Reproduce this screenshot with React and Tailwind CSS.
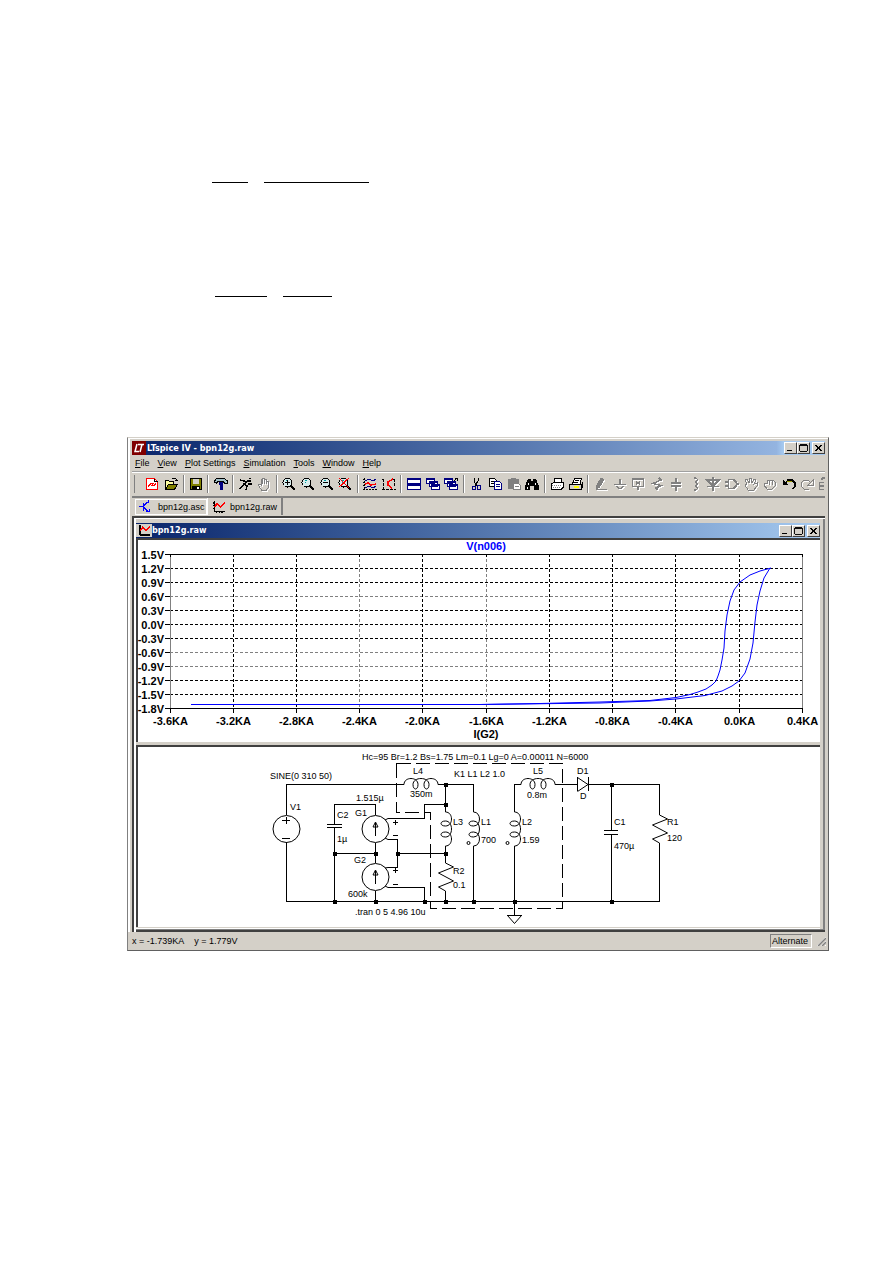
const MENUS = ['File', 'View', 'Plot Settings', 'Simulation', 'Tools', 'Window', 'Help']

const GRAY = '#808080'
const NAVY = '#000080'

function Svg({ children, className = 'block h-4 w-4 shrink-0' }) {
  return (
    <svg viewBox="0 0 16 16" className={className} fill="none" stroke="#000" shapeRendering="crispEdges" aria-hidden="true">
      {children}
    </svg>
  )
}

// Disabled icons are gray with a white highlight one pixel down and to the right
function Etched({ children }) {
  return (
    <Svg>
      <g stroke="#fff" transform="translate(1 1)">{children}</g>
      <g stroke={GRAY}>{children}</g>
    </Svg>
  )
}

function Lens({ children }) {
  return (
    <Svg>
      <circle cx="6.5" cy="6.5" r="4.5" fill="#d8ecec" />
      <path d="M5 4.5h2M4.5 6h1" stroke="#00a0a0" />
      <path d="M10 10l4 4" strokeWidth="2" />
      {children}
    </Svg>
  )
}

function Cascade({ children }) {
  return (
    <Svg>
      <g stroke={NAVY} fill="#fff">
        <path d="M1.5 2.5h8v5h-8zM4.5 5.5h8v5h-8zM6.5 8.5h8v5h-8z" />
        <path d="M1 3.5h9M4 6.5h9M6 9.5h9" />
      </g>
      {children}
    </Svg>
  )
}

function PlotIcon({ className }) {
  return (
    <Svg className={className}>
      <path d="M2.5 1v13M2 13.5h13M1 3.5h1M1 6.5h1M1 9.5h1M5.5 14v1M8.5 14v1M11.5 14v1" strokeWidth="1.5" />
      <path d="M3 8l3-4 4 4 5-5" stroke="#f00" strokeWidth="2" />
    </Svg>
  )
}

const HAND = 'M5.5 14L2.5 9.5V8h2l1 1V3.5h1V8V2.5h2V8V3.5h2V8V5.5h2V11l-2 3z'

const TOOL_GROUPS = [
  [
    ['New Schematic', <Svg><path d="M2.5 2.5h8l3 3v8h-11z" fill="#fff" stroke="#f00" /><path d="M10.5 2.5v3h3" stroke="#000" /><path d="M4 10.5l3-3h2l-1 2h2l2-2" stroke="#f00" strokeWidth="1.5" /></Svg>],
    ['Open', <Svg><path d="M2.5 13V4.5h3l1 1h4V8" fill="#ffffa0" /><path d="M2.5 13.5L5.5 8.5h9l-3 5z" fill="#808000" /><path d="M9 3l2-1 2 1v2M11.5 4.5h3" /></Svg>],
  ],
  [
    ['Save', <Svg><path d="M2.5 2.5h11v11h-11z" fill="#808000" /><path d="M5 3h6v5H5z" fill="#d4d0c8" stroke="none" /><path d="M4 10h8v4H4z" fill="#000" stroke="none" /><path d="M9 11h2v2H9z" fill="#fff" stroke="none" /></Svg>],
  ],
  [
    ['Control Panel', <Svg><path d="M1.5 6.5V5l2-2.5h8L14.5 5v2h-3L10 5.5H5L3.5 7z" fill="#a0c0c8" /><path d="M6 7h4M8 7v7" stroke={NAVY} strokeWidth="3" /></Svg>],
  ],
  [
    ['Run', <Svg><path d="M11 2.5h2M13 5l-3 0-4 3 3 2-1 4M6 8l-4 5M2 4l4 1 3 1M10 8h4" strokeWidth="1.5" /></Svg>],
    ['Halt', <Etched><path d={HAND} /></Etched>],
  ],
  [
    ['Zoom In', <Lens><path d="M4 6.5h5M6.5 4v5" /></Lens>],
    ['Pan', <Lens />],
    ['Zoom Out', <Lens><path d="M4 6.5h5" /></Lens>],
    ['Zoom Full', <Lens><path d="M2 2l10 10M12 2L2 11" stroke="#f00" strokeWidth="1.25" /></Lens>],
  ],
  [
    ['Autorange', <Svg><path d="M2.5 2v12M1 13.5h14M1 3.5h1M1 6.5h1M1 9.5h1" strokeDasharray="2 1" /><path d="M3 8l3-1 3 2 5-1" stroke="#f00" strokeWidth="1.5" /><path d="M3 5l4-2 4 2 3-2M3 12l4-2 4 2 3-2" stroke={NAVY} /></Svg>],
    ['Pick Visible Traces', <Svg><path d="M2.5 3v11M1 13.5h14M1 3.5h2M13.5 3v8M11 3.5h4" strokeDasharray="3 1" /><path d="M12 3L7 6v3l4 3" stroke="#f00" strokeWidth="1.5" /></Svg>],
  ],
  [
    ['Tile', <Svg><path d="M1.5 2.5h13v5h-13zM1.5 8.5h13v5h-13z" stroke={NAVY} fill="#fff" /><path d="M1 3h14M1 9h14" stroke={NAVY} strokeWidth="2" /></Svg>],
    ['Cascade', <Cascade />],
    ['Close All', <Cascade><path d="M11 5l3-3M12 2.5h3M14.5 2v3" /></Cascade>],
  ],
  [
    ['Cut', <Svg><path d="M6 2v3l3 5M10 2v3L7 10" /><path d="M4.5 10.5h3v3h-3zM9.5 9.5h3v4h-3z" stroke={NAVY} /></Svg>],
    ['Copy', <Svg><path d="M2.5 2.5h5l2 2v6h-7zM4 5.5h3M4 7.5h3" fill="#fff" /><path d="M7.5 5.5h5l2 2v6h-7zM9 8.5h4M9 10.5h4" fill="#fff" stroke={NAVY} /></Svg>],
    ['Paste', <Svg><path d="M2 3h11v10H2z" fill={GRAY} stroke="none" /><path d="M5 2.5h5" stroke={GRAY} strokeWidth="2" /><path d="M7.5 7.5h5l2 2v4h-7zM9 10.5h4" fill="#fff" stroke={GRAY} /></Svg>],
    ['Find', <Svg><path d="M4 3h3v2h2V3h3l3 7v4h-5v-4H6v4H1v-4z" fill="#000" stroke="none" /><path d="M4 7v2M11 7v2M3 11v2" stroke="#fff" /></Svg>],
  ],
  [
    ['Print Setup', <Svg><path d="M5 7l1-4.5h7L12 7M2.5 8L5 6.5h9v5l-2 2H2.5z" fill="#fff" /><path d="M3 9.5h9M4 11.5h8" stroke={GRAY} strokeDasharray="1 1" /></Svg>],
    ['Print', <Svg><path d="M4.5 8l2-5.5h7L12 8" fill="#fff" /><path d="M7 4.5h4M6 6.5h4" /><path d="M1.5 8.5h12v5h-12z" fill="#d4d0c8" strokeWidth="1.5" /><path d="M6 11h5" stroke="#ff0" strokeWidth="1.5" /><path d="M14.5 6v6" /></Svg>],
  ],
  [
    ['Wire', <Etched><path d="M8 2L3 11v2l3-2 5-8" fill={GRAY} /><path d="M3 13.5h11" strokeWidth="1.5" /></Etched>],
    ['Ground', <Etched><path d="M8 3v5M2 8.5h12M4 10l4 3 4-3" strokeWidth="1.25" /></Etched>],
    ['Label Net', <Etched><path d="M2.5 3h11v7.5h-11zM8 10v4M6.5 5v4M9.5 5v4M6 7h4" strokeWidth="1.5" /></Etched>],
    ['Resistor', <Etched><path d="M10 2l2 2-8 3.5 8 2-5 2.5 2 2" strokeWidth="1.5" /></Etched>],
    ['Capacitor', <Etched><path d="M8 2v5M8 10v5M3 7h10M3 10h10" strokeWidth="1.75" /></Etched>],
    ['Inductor', <Etched><path d="M7 2h2l2 2-3 2 3 2-3 2 3 2-2 2H7" strokeWidth="1.25" /></Etched>],
    ['Diode', <Etched><path d="M8 1v14M2 4h12L8 10zM2 10.5h12" strokeWidth="1.5" /></Etched>],
    ['Component', <Etched><path d="M4.5 3.5h5l3 3v3l-3 3h-5zM1 6h3M1 10h3M12 8h3" strokeWidth="1.5" /></Etched>],
    ['Move', <Etched><path d="M5 14L2 9l2-1L2 4l2-1 2 4V2h2l1 5 2-4 2 1-2 4 3-1v3l-3 4z" /></Etched>],
    ['Drag', <Etched><path d="M5 13L2 9V7h3V5l2-1 2 1 2-1 2 2v4l-3 3zM7.5 5v4M10 5v4" /></Etched>],
    ['Undo', <Svg><path d="M4 8l3-4h4l3 3v3l-2 3" strokeWidth="1.5" /><path d="M6 6l2-1h3" stroke="#a0a000" /><path d="M2 4v5h5z" fill="#000" stroke="none" /></Svg>],
    ['Redo', <Etched><path d="M12 7L9 4H5L2 7v3l3 3h5M14 4v5H9z" /></Etched>],
  ],
]

const BEVEL = 'border border-t-white border-l-white border-r-[#404040] border-b-[#404040] bg-[#d4d0c8]'

function CaptionButtons() {
  return (
    <div className="ml-auto flex shrink-0">
      <button aria-label="Minimize" className={`${BEVEL} h-3 w-[13px]`}>
        <Svg className="block h-full w-full"><path d="M3 12h7" strokeWidth="3" /></Svg>
      </button>
      <button aria-label="Maximize" className={`${BEVEL} h-3 w-[13px]`}>
        <Svg className="block h-full w-full"><path d="M2 2.5h12v11H2zM2 4h12" strokeWidth="1.5" /></Svg>
      </button>
      <button aria-label="Close" className={`${BEVEL} ml-0.5 h-3 w-[13px]`}>
        <Svg className="block h-full w-full"><path d="M3 3l10 10M13 3L3 13" strokeWidth="2.5" /></Svg>
      </button>
    </div>
  )
}

// ---- waveform plot ----
const X_TICKS = [-3.6, -3.2, -2.8, -2.4, -2.0, -1.6, -1.2, -0.8, -0.4, 0, 0.4]
const Y_TICKS = [1.5, 1.2, 0.9, 0.6, 0.3, 0, -0.3, -0.6, -0.9, -1.2, -1.5, -1.8]
const FAINT_X = [-2.4, -1.6]
const FAINT_Y = [0.6, -0.6, -0.9]
const xPos = (v) => Math.floor(32 + (v + 3.6) * 158.1) + 0.5
const yPos = (v) => Math.floor(14 + (1.5 - v) * 46.7) + 0.5

function Waveform() {
  return (
    <svg viewBox="0 0 682 202" className="block h-auto w-full bg-white" fill="none" stroke="#000" role="img" aria-label="V(n006) against I(G2)">
      <g shapeRendering="crispEdges">
        {Y_TICKS.slice(1, -1).map((v) => (
          <path key={v} d={`M32 ${yPos(v)}H665`} strokeDasharray="3 2" stroke={FAINT_Y.includes(v) ? GRAY : '#000'} />
        ))}
        {X_TICKS.slice(1, -1).map((v) => (
          <path key={v} d={`M${xPos(v)} 14V168`} strokeDasharray="3 2" stroke={FAINT_X.includes(v) ? GRAY : '#000'} />
        ))}
        <path d="M32.5 14V168M664.5 14V168" stroke={GRAY} />
        <path d="M32 14.5H665M32 168.5H665" />
        {Y_TICKS.map((v) => <path key={v} d={`M27 ${yPos(v)}h5`} />)}
        {X_TICKS.map((v) => <path key={v} d={`M${xPos(v)} 14v3M${xPos(v)} 168v5`} />)}
      </g>
      <g stroke="#0000ff">
        <path d="M53 164.5H342L402 163.5 462 162 512 160.5 538 157.5 552 154.5 560 152 568 149 574 145 578 141 580 136 582 130 584 120 586 108 587 91 589 75 592 61 596 50 602 42 612 35 622 31 633 28" />
        <path d="M342 164.5L462 163 512 161 538 159 567 155.5 584 151 594 146 601 141 607 133 612 119 615 103 617 82 619 65 622 51 626 38 632 28" />
      </g>
      <g fill="#000" stroke="none" className="font-['Liberation_Sans',Arial,sans-serif] text-[11px] font-bold">
        {Y_TICKS.map((v) => <text key={v} x="26" y={yPos(v) + 4} textAnchor="end">{v.toFixed(1)}V</text>)}
        {X_TICKS.map((v) => <text key={v} x={xPos(v)} y="185" textAnchor="middle">{v.toFixed(1)}KA</text>)}
        <text x="348" y="10" textAnchor="middle" fill="#0000ff">V(n006)</text>
        <text x="348" y="198" textAnchor="middle">I(G2)</text>
      </g>
    </svg>
  )
}

// ---- schematic ----
const COIL = 'M0 0C0-8 14-8 14 0C14 6 9 6 9 0C9-8 25-8 25 0C25 6 20 6 20 0C20-8 34-8 34 0'
const ZIGZAG = 'l8 4-15 6 15 8-15 6 7 4'

const NODES = [
  [196, 106], [237, 106], [259, 106], [307, 106], [307, 37], [307, 57], [473, 37],
  [196, 154], [237, 154], [286, 154], [307, 154], [335, 154], [376, 154], [473, 154],
]

const LABELS = [
  [224, 13, 'Hc=95 Br=1.2 Bs=1.75 Lm=0.1 Lg=0 A=0.00011 N=6000'],
  [132, 32, 'SINE(0 310 50)'],
  [152, 63, 'V1'],
  [275, 27, 'L4'], [272, 50, '350m'],
  [316, 30, 'K1 L1 L2 1.0'],
  [395, 27, 'L5'], [389, 51, '0.8m'],
  [439, 27, 'D1'], [442, 52, 'D'],
  [218, 54, '1.515µ'], [217, 69, 'G1'],
  [199, 71, 'C2'], [199, 95, '1µ'],
  [216, 116, 'G2'], [210, 150, '600k'],
  [217, 168, '.tran 0 5 4.96 10u'],
  [315, 78, 'L3'], [315, 127, 'R2'], [315, 141, '0.1'],
  [343, 78, 'L1'], [343, 96, '700'],
  [384, 78, 'L2'], [384, 96, '1.59'],
  [476, 78, 'C1'], [476, 102, '470µ'],
  [529, 78, 'R1'], [529, 94, '120'],
]

function Schematic() {
  return (
    <svg viewBox="0 0 682 180" className="block h-auto w-full bg-white" fill="none" stroke="#000" role="img" aria-label="Circuit schematic">
      <g shapeRendering="crispEdges">
        {/* wires */}
        <path d="M148.5 68V37.5H266M148.5 95V154.5H521.5V96M300 37.5H335.5V65M335.5 99V154M307.5 37V65M307.5 99V116M307.5 144V154" />
        <path d="M196.5 77V57.5H237.5V68M196.5 81V154M196 106.5H237M237.5 96V116M237.5 144V154" />
        <path d="M250 71.5H286.5V57.5H307M250 92.5H259.5V120.5H250M259 106.5H307M250 140.5H286.5V154" />
        <path d="M376.5 65V37.5H383M376.5 99V168.5M417 37.5H439M450 37.5H521.5V68M473.5 37V83M473.5 87V154" />
        {/* capacitor plates, diode bar, ground */}
        <path d="M189 77.5h15M189 80.5h15M466 83.5h14M466 87.5h14M450.5 30v14M439.5 30v14M369 168.5h15" />
        {/* source polarity marks */}
        <path d="M144 73.5h8M148.5 70v7M144 91.5h8M255 75.5h5M257.5 73v5M255 88.5h5M255 123.5h5M257.5 121v5M255 137.5h5" />
        <path d="M258.5 16.5H424.5V161.5H292.5V65.5H258.5Z" strokeDasharray="14 5" />
      </g>
      <circle cx="148.5" cy="82" r="13.5" />
      <circle cx="237.5" cy="82" r="13.5" />
      <circle cx="237.5" cy="130" r="13.5" />
      <path d="M237.5 89V76M235 80l2.5-5 2.5 5zM237.5 137v-13M235 128l2.5-5 2.5 5z" />
      <path d="M247 73l3-1.5M247 91l3 1.5M247 121l3-.5M247 139l3 1.5" />
      <path d="M439.5 30.5L450 37.5 439.5 44.5M369.5 168.5L376.5 176.5 383.5 168.5" />
      <path d={COIL} transform="translate(266 37.5)" />
      <path d={COIL} transform="translate(383 37.5)" />
      <path d={COIL} transform="translate(307.5 65) rotate(90)" />
      <path d={COIL} transform="translate(335.5 65) rotate(90)" />
      <path d={COIL} transform="translate(376.5 65) rotate(90)" />
      <circle cx="330.5" cy="96" r="1.5" />
      <circle cx="369.5" cy="96" r="1.5" />
      <path d={`M307.5 116${ZIGZAG}M521.5 68${ZIGZAG}`} />
      <g fill="#000" stroke="none" shapeRendering="crispEdges">
        {NODES.map(([x, y]) => <rect key={`${x}-${y}`} x={x - 1} y={y - 1} width="4" height="4" />)}
      </g>
      <g fill="#000" stroke="none" className="font-['Liberation_Sans',Arial,sans-serif] text-[9px]">
        {LABELS.map(([x, y, label]) => <text key={label} x={x} y={y}>{label}</text>)}
      </g>
    </svg>
  )
}

export default function App() {
  return (
    <main className="min-h-screen bg-white pr-16 pl-[127px] font-['Liberation_Sans',Arial,sans-serif] text-[9px] text-black">
      {/* fraction bars left from the formulas */}
      <div className="flex gap-4 pt-[182px] pl-[85px]">
        <hr className="w-9 border-black" />
        <hr className="w-[105px] border-black" />
      </div>
      <div className="flex gap-4 pt-[113px] pl-[88px]">
        <hr className="w-[52px] border-black" />
        <hr className="w-[49px] border-black" />
      </div>

      <section className="mt-[140px] border border-t-[#d4d0c8] border-r-[#606060] border-b-[#606060] border-l-[#808080] bg-[#d4d0c8]">
        <div className="border-t border-l-2 border-white pt-0.5 pr-[3px] pl-0.5">
          <header className="flex h-[14px] items-center bg-linear-to-r from-[#0a246a] via-[#94b4e0] via-93% to-[#a6caf0] to-94% text-white">
            <svg viewBox="0 0 14 14" className="block h-[14px] w-[14px] shrink-0" aria-hidden="true">
              <path d="M0 0h14v14H0z" fill="#800000" />
              <path d="M5 3L3 10.5h4M6 3.5h6M10 3.5L8 11" fill="none" stroke="#fff" strokeWidth="1.5" />
            </svg>
            <h1 className="pl-px font-['DejaVu_Sans_Condensed','DejaVu_Sans',sans-serif] text-[9px] leading-[14px] font-bold whitespace-nowrap">LTspice IV - bpn12g.raw</h1>
            <CaptionButtons />
          </header>

          <nav className="flex h-4 items-center gap-2 pl-[3px] leading-4">
            {MENUS.map((name) => (
              <button key={name} className="whitespace-nowrap"><span className="underline">{name[0]}</span>{name.slice(1)}</button>
            ))}
          </nav>

          <div className="flex h-[27px] items-center overflow-hidden border-t border-b-2 border-t-[#a0a0a0] border-b-[#808080] shadow-[inset_0_1px_0_#fff]">
            <div className="mr-2 ml-0.5 h-[18px] w-px shrink-0 bg-[#808080]" />
            {TOOL_GROUPS.map((group, i) => (
              <div key={i} className="contents">
                {i > 0 && <div className="flex h-[18px] w-1.5 shrink-0 justify-center"><span className="w-0.5 border-r border-l border-r-white border-l-[#808080]" /></div>}
                {group.map(([label, icon]) => (
                  <button key={label} aria-label={label} title={label} className="flex flex-1 justify-center">{icon}</button>
                ))}
              </div>
            ))}
            <button aria-label="Rotate" className="w-2 shrink-0 overflow-hidden">
              <svg viewBox="0 0 8 16" className="block h-4 w-2" fill="none" stroke={GRAY} shapeRendering="crispEdges" aria-hidden="true">
                <path d="M4 4l2-2h2M7 6.5H2.5v7H7M3 10h4" strokeWidth="1.5" />
              </svg>
            </button>
          </div>

          <div role="tablist" className="flex h-[18px] items-start pl-[3px] leading-4">
            <button role="tab" aria-selected="false" className="mt-px flex h-4 w-[72px] items-center gap-1.5 border border-white pl-0.5 whitespace-nowrap">
              <Svg className="block h-[14px] w-[14px] shrink-0"><path d="M1 7.5h5M6.5 3v9M7 6l5-4M7 9l5 5M12 2V0M9 13h4v-3" stroke="#0000ff" strokeWidth="1.5" /></Svg>
              bpn12g.asc
            </button>
            <button role="tab" aria-selected="true" className="flex h-[17px] w-[76px] items-center gap-1 border-r-2 border-l border-r-[#808080] border-l-white pl-1 whitespace-nowrap">
              <PlotIcon className="block h-[14px] w-[14px] shrink-0" />
              bpn12g.raw
            </button>
          </div>
        </div>

        {/* document area */}
        <div className="mr-[3px] border-l-2 border-white pl-0.5">
          <div className="border-t-2 border-l-2 border-[#404040]">
            <div className="border-t border-l-2 border-white">
              <article className="border-r-2 border-[#808080] pr-[3px]">
                <div className="pt-1">
                  <header className="flex h-[15px] items-center bg-linear-to-r from-[#0a246a] to-[#a6caf0] text-white">
                    <span className="block h-[13px] w-4 shrink-0 bg-[#d4d0c8]"><PlotIcon className="mx-auto block h-[13px] w-[13px]" /></span>
                    <h2 className="font-['DejaVu_Sans_Condensed','DejaVu_Sans',sans-serif] text-[9px] leading-[15px] font-bold">bpn12g.raw</h2>
                    <CaptionButtons />
                  </header>
                </div>
                <div className="border-t-2 border-l-2 border-[#404040]">
                  <Waveform />
                </div>
                <div className="mt-[3px] border-t-2 border-l-2 border-[#404040]">
                  <Schematic />
                </div>
                <div className="h-0.5 border-b border-white" />
              </article>
              <div className="h-[3px] border-t border-b-2 border-t-[#808080] border-b-[#404040]" />
            </div>
          </div>
        </div>

        <footer className="flex h-[18px] items-center gap-[10px] pr-0.5 pl-1 leading-[14px]">
          <span>x = -1.739KA</span>
          <span>y = 1.779V</span>
          <span className="ml-auto h-[14px] w-[42px] border border-t-[#808080] border-r-white border-b-white border-l-[#808080] pl-px leading-3">Alternate</span>
          <svg viewBox="0 0 10 10" className="-ml-1.5 block h-[10px] w-[10px]" fill="none" aria-hidden="true">
            <path d="M1 10l9-9M5 10l5-5M9 10l1-1" stroke="#fff" />
            <path d="M2 10l8-8M6 10l4-4" stroke={GRAY} strokeWidth="1.5" />
          </svg>
        </footer>
      </section>
    </main>
  )
}
